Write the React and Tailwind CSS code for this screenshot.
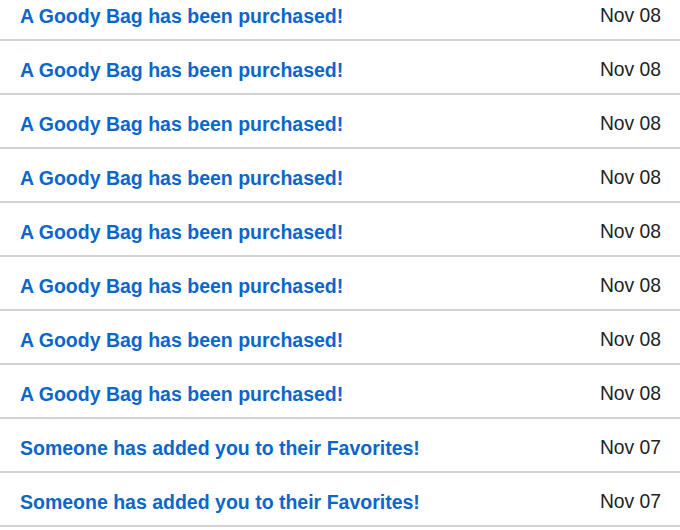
import React from "react";

const items = [
    ...Array(8).fill({ title: "A Goody Bag has been purchased!", date: "Nov 08" }),
    ...Array(2).fill({ title: "Someone has added you to their Favorites!", date: "Nov 07" }),
];

const App = () => {
    return (
        <div className="w-[680px] h-[530px] overflow-hidden bg-white font-['Liberation_Sans',Arial,sans-serif]">
            <ul className="-mt-[13px]">
                {items.map((item, i) => (
                    <li
                        key={i}
                        className="flex items-center justify-between h-[54px] pt-[7px] pl-5 pr-[19px] border-b-2 border-[#d2d2d2]"
                    >
                        <a href="#" className="text-[19.5px] font-bold text-[#0b66c9]">
                            {item.title}
                        </a>
                        <span className="text-[19.3px] text-[#222]">{item.date}</span>
                    </li>
                ))}
            </ul>
        </div>
    );
};

export default App;
